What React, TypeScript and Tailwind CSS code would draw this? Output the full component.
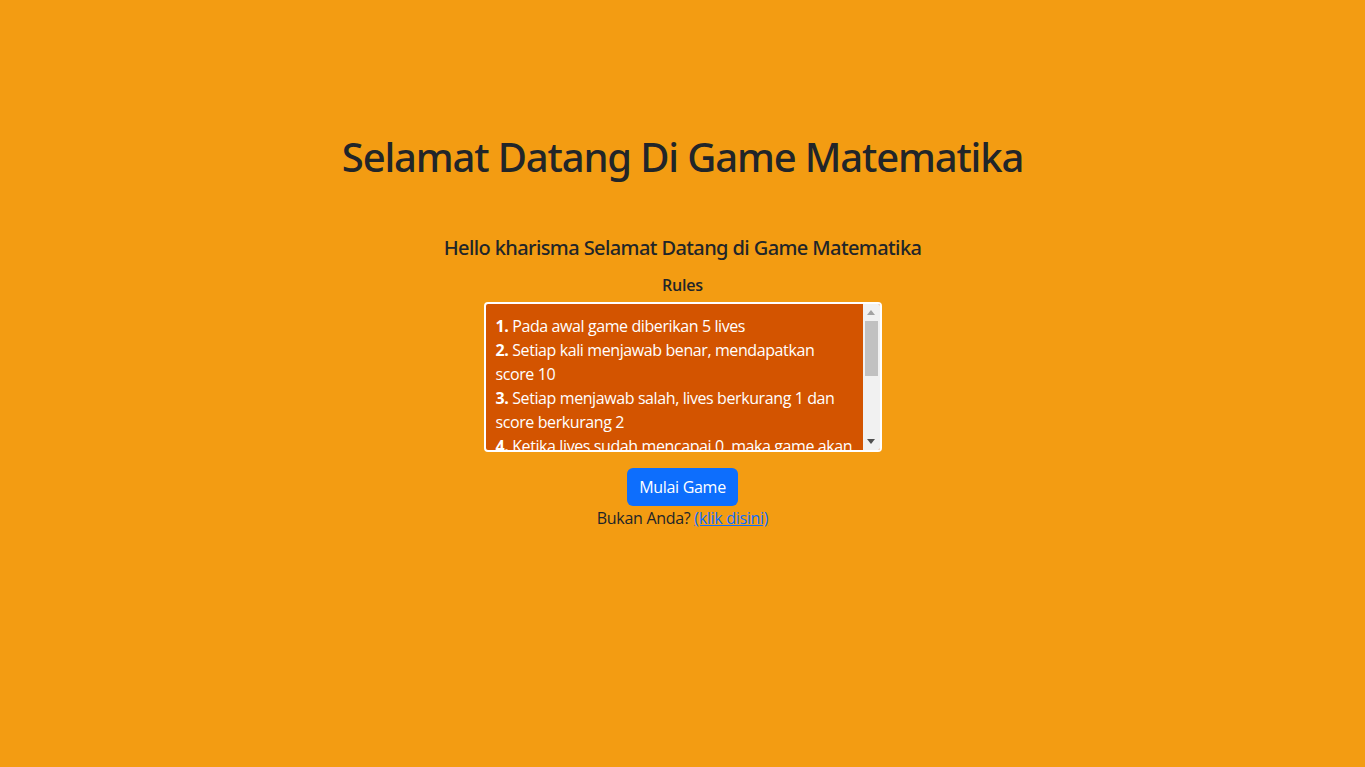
import React from "react";

function FakeScrollbar() {
  return (
    <div className="w-[17px] h-full bg-[#f1f1f1] flex flex-col items-center shrink-0">
      <div className="h-[17px] w-full flex items-center justify-center">
        <svg width="8" height="5" viewBox="0 0 8 5">
          <polygon points="4,0 8,5 0,5" fill="#a3a3a3" />
        </svg>
      </div>
      <div className="w-[13px] h-[55px] bg-[#c1c1c1]" />
      <div className="flex-1" />
      <div className="h-[17px] w-full flex items-center justify-center">
        <svg width="8" height="5" viewBox="0 0 8 5">
          <polygon points="0,0 8,0 4,5" fill="#505050" />
        </svg>
      </div>
    </div>
  );
}

export default function App() {
  return (
    <div
      className="min-h-[767px] w-full bg-[#f39c12] text-[#212529] flex flex-col items-center"
      style={{ fontFamily: '"Open Sans", "Noto Sans", sans-serif' }}
    >
      <h1
        className="mt-[133px] text-[40px] leading-[48px] font-medium tracking-[-1.15px]"
        style={{ fontFamily: '"Noto Sans", sans-serif' }}
      >
        Selamat Datang Di Game Matematika
      </h1>
      <h5
        className="mt-[55px] text-[20px] leading-[24px] font-medium tracking-[-0.6px]"
        style={{ fontFamily: '"Noto Sans", sans-serif' }}
      >
        Hello kharisma Selamat Datang di Game Matematika
      </h5>
      <h6 className="mt-[13px] text-[16px] leading-[24px] font-semibold tracking-[-0.2px]">Rules</h6>
      <div className="mt-[5px] w-[398px] h-[150px] border-2 border-white rounded-[4px] bg-[#d35400] text-white flex overflow-hidden">
        <div className="flex-1 overflow-hidden pl-[10px] pr-[7px] pt-[10px] text-[16px] leading-[24px] tracking-[-0.4px]">
          <b>1.</b> Pada awal game diberikan 5 lives
          <br />
          <b>2.</b> Setiap kali menjawab benar, mendapatkan score 10
          <br />
          <b>3.</b> Setiap menjawab salah, lives berkurang 1 dan score berkurang 2
          <br />
          <b>4.</b> Ketika lives sudah mencapai 0, maka game akan berakhir
          <br />
          <b>5.</b> Score tertinggi akan disimpan
        </div>
        <FakeScrollbar />
      </div>
      <button className="mt-[16px] h-[38px] px-[12px] rounded-[6px] bg-[#0d6efd] text-white text-[16px] leading-[24px] tracking-[-0.3px]">
        Mulai Game
      </button>
      <p className="text-[16px] leading-[24px] tracking-[-0.3px]">
        Bukan Anda?{" "}
        <a href="#" className="text-[#0d6efd] underline">
          (klik disini)
        </a>
      </p>
    </div>
  );
}
